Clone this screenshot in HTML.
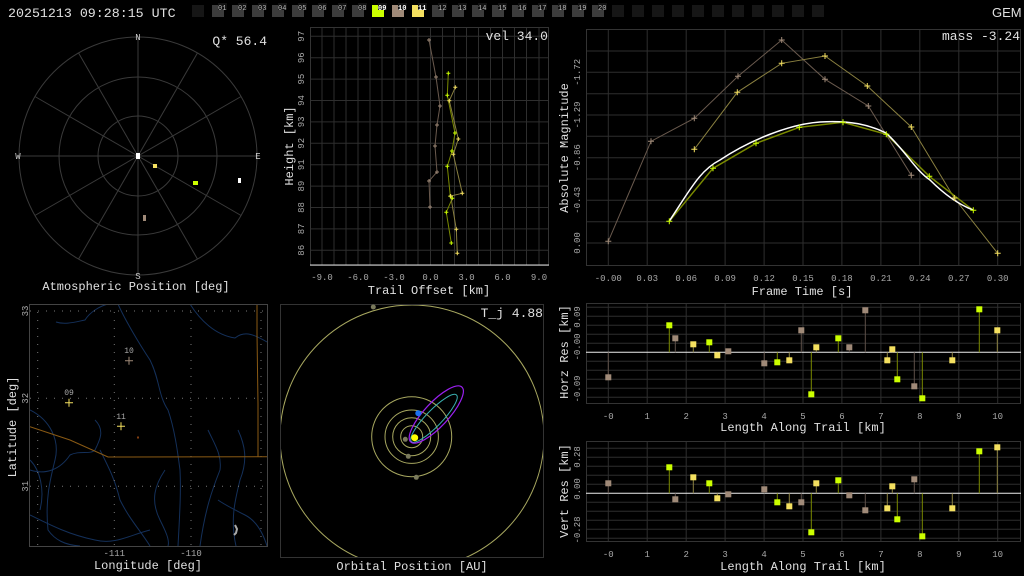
<!DOCTYPE html>
<html><head><meta charset="utf-8"><style>
html,body{margin:0;padding:0;background:#000;width:1024px;height:576px;overflow:hidden}
svg{display:block}
text{font-family:"Liberation Mono",monospace}
.t{fill:#e0e0e0;font-size:12px}
.k{fill:#a8a8a8;font-size:9px}
.g{stroke:#2e2e2e;stroke-width:1;fill:none}
</style></head><body>
<svg width="1024" height="576" viewBox="0 0 1024 576" xmlns="http://www.w3.org/2000/svg">
<rect width="1024" height="576" fill="#000"/>
<!-- header -->
<text x="8" y="17" fill="#e0e0e0" style="font-size:13.3px">20251213 09:28:15 UTC</text>
<text x="992" y="17" fill="#e0e0e0" style="font-family:'Liberation Sans',sans-serif;font-size:13px">GEM</text>
<g>
<rect x="192" y="5" width="12" height="12" fill="#161616"/>
<rect x="212" y="5" width="12" height="12" fill="#3c3c3c"/><rect x="218" y="3" width="9" height="7" fill="#111"/><text x="218" y="10" fill="#bbb" style="font-size:7px">01</text>
<rect x="232" y="5" width="12" height="12" fill="#3c3c3c"/><rect x="238" y="3" width="9" height="7" fill="#111"/><text x="238" y="10" fill="#bbb" style="font-size:7px">02</text>
<rect x="252" y="5" width="12" height="12" fill="#3c3c3c"/><rect x="258" y="3" width="9" height="7" fill="#111"/><text x="258" y="10" fill="#bbb" style="font-size:7px">03</text>
<rect x="272" y="5" width="12" height="12" fill="#3c3c3c"/><rect x="278" y="3" width="9" height="7" fill="#111"/><text x="278" y="10" fill="#bbb" style="font-size:7px">04</text>
<rect x="292" y="5" width="12" height="12" fill="#3c3c3c"/><rect x="298" y="3" width="9" height="7" fill="#111"/><text x="298" y="10" fill="#bbb" style="font-size:7px">05</text>
<rect x="312" y="5" width="12" height="12" fill="#3c3c3c"/><rect x="318" y="3" width="9" height="7" fill="#111"/><text x="318" y="10" fill="#bbb" style="font-size:7px">06</text>
<rect x="332" y="5" width="12" height="12" fill="#3c3c3c"/><rect x="338" y="3" width="9" height="7" fill="#111"/><text x="338" y="10" fill="#bbb" style="font-size:7px">07</text>
<rect x="352" y="5" width="12" height="12" fill="#3c3c3c"/><rect x="358" y="3" width="9" height="7" fill="#111"/><text x="358" y="10" fill="#bbb" style="font-size:7px">08</text>
<rect x="372" y="5" width="12" height="12" fill="#ccff00"/><rect x="378" y="3" width="9" height="7" fill="#111"/><text x="378" y="10" fill="#fff" style="font-size:7px;font-weight:bold">09</text>
<rect x="392" y="5" width="12" height="12" fill="#a08a78"/><rect x="398" y="3" width="9" height="7" fill="#111"/><text x="398" y="10" fill="#fff" style="font-size:7px;font-weight:bold">10</text>
<rect x="412" y="5" width="12" height="12" fill="#f4e060"/><rect x="418" y="3" width="9" height="7" fill="#111"/><text x="418" y="10" fill="#fff" style="font-size:7px;font-weight:bold">11</text>
<rect x="432" y="5" width="12" height="12" fill="#3c3c3c"/><rect x="438" y="3" width="9" height="7" fill="#111"/><text x="438" y="10" fill="#bbb" style="font-size:7px">12</text>
<rect x="452" y="5" width="12" height="12" fill="#3c3c3c"/><rect x="458" y="3" width="9" height="7" fill="#111"/><text x="458" y="10" fill="#bbb" style="font-size:7px">13</text>
<rect x="472" y="5" width="12" height="12" fill="#3c3c3c"/><rect x="478" y="3" width="9" height="7" fill="#111"/><text x="478" y="10" fill="#bbb" style="font-size:7px">14</text>
<rect x="492" y="5" width="12" height="12" fill="#3c3c3c"/><rect x="498" y="3" width="9" height="7" fill="#111"/><text x="498" y="10" fill="#bbb" style="font-size:7px">15</text>
<rect x="512" y="5" width="12" height="12" fill="#3c3c3c"/><rect x="518" y="3" width="9" height="7" fill="#111"/><text x="518" y="10" fill="#bbb" style="font-size:7px">16</text>
<rect x="532" y="5" width="12" height="12" fill="#3c3c3c"/><rect x="538" y="3" width="9" height="7" fill="#111"/><text x="538" y="10" fill="#bbb" style="font-size:7px">17</text>
<rect x="552" y="5" width="12" height="12" fill="#3c3c3c"/><rect x="558" y="3" width="9" height="7" fill="#111"/><text x="558" y="10" fill="#bbb" style="font-size:7px">18</text>
<rect x="572" y="5" width="12" height="12" fill="#3c3c3c"/><rect x="578" y="3" width="9" height="7" fill="#111"/><text x="578" y="10" fill="#bbb" style="font-size:7px">19</text>
<rect x="592" y="5" width="12" height="12" fill="#3c3c3c"/><rect x="598" y="3" width="9" height="7" fill="#111"/><text x="598" y="10" fill="#bbb" style="font-size:7px">20</text>
<g fill="#161616"><rect x="612" y="5" width="12" height="12"/><rect x="632" y="5" width="12" height="12"/><rect x="652" y="5" width="12" height="12"/><rect x="672" y="5" width="12" height="12"/><rect x="692" y="5" width="12" height="12"/><rect x="712" y="5" width="12" height="12"/><rect x="732" y="5" width="12" height="12"/><rect x="752" y="5" width="12" height="12"/><rect x="772" y="5" width="12" height="12"/><rect x="792" y="5" width="12" height="12"/><rect x="812" y="5" width="12" height="12"/></g>
</g>

<!-- polar panel -->
<g stroke="#3a3a3a" fill="none" stroke-width="1">
<circle cx="138" cy="156" r="40"/><circle cx="138" cy="156" r="79"/><circle cx="138" cy="156" r="119"/>
<line x1="138" y1="37" x2="138" y2="275"/><line x1="19" y1="156" x2="257" y2="156"/>
<line x1="78.5" y1="52.9" x2="197.5" y2="259.1"/><line x1="197.5" y1="52.9" x2="78.5" y2="259.1"/>
<line x1="34.9" y1="96.5" x2="241.1" y2="215.5"/><line x1="241.1" y1="96.5" x2="34.9" y2="215.5"/>
</g>
<g fill="#ccc" style="font-size:9px" text-anchor="middle"><text x="138" y="40">N</text><text x="138" y="279">S</text><text x="18" y="159">W</text><text x="258" y="159">E</text></g>
<text x="267" y="45" class="t" text-anchor="end" style="font-size:13px">Q* 56.4</text>
<rect x="136" y="153" width="4" height="6" fill="#fff"/>
<rect x="153" y="164" width="4" height="4" fill="#f4e060"/>
<rect x="193" y="181" width="5" height="4" fill="#ccff00"/>
<rect x="143" y="215" width="3" height="6" fill="#a08a78"/>
<rect x="238" y="178" width="3" height="5" fill="#fff"/>
<text x="136" y="290" class="t" text-anchor="middle">Atmospheric Position [deg]</text>

<!-- trail panel -->
<g class="g">
<line x1="322" y1="27" x2="322" y2="265"/><line x1="334" y1="27" x2="334" y2="265"/><line x1="346" y1="27" x2="346" y2="265"/><line x1="358" y1="27" x2="358" y2="265"/><line x1="370" y1="27" x2="370" y2="265"/><line x1="382" y1="27" x2="382" y2="265"/><line x1="394" y1="27" x2="394" y2="265"/><line x1="406" y1="27" x2="406" y2="265"/><line x1="418" y1="27" x2="418" y2="265"/><line x1="430.5" y1="27" x2="430.5" y2="265"/><line x1="442.5" y1="27" x2="442.5" y2="265"/><line x1="454.5" y1="27" x2="454.5" y2="265"/><line x1="466.5" y1="27" x2="466.5" y2="265"/><line x1="478.5" y1="27" x2="478.5" y2="265"/><line x1="490.5" y1="27" x2="490.5" y2="265"/><line x1="502.5" y1="27" x2="502.5" y2="265"/><line x1="514.5" y1="27" x2="514.5" y2="265"/><line x1="526.5" y1="27" x2="526.5" y2="265"/><line x1="539" y1="27" x2="539" y2="265"/>
<line x1="310" y1="36.3" x2="548" y2="36.3"/><line x1="310" y1="57.7" x2="548" y2="57.7"/><line x1="310" y1="79.1" x2="548" y2="79.1"/><line x1="310" y1="100.5" x2="548" y2="100.5"/><line x1="310" y1="121.9" x2="548" y2="121.9"/><line x1="310" y1="143.3" x2="548" y2="143.3"/><line x1="310" y1="164.7" x2="548" y2="164.7"/><line x1="310" y1="186.1" x2="548" y2="186.1"/><line x1="310" y1="207.5" x2="548" y2="207.5"/><line x1="310" y1="228.9" x2="548" y2="228.9"/><line x1="310" y1="250.3" x2="548" y2="250.3"/>
<rect x="310.5" y="27.5" width="238" height="238" stroke="#333"/>
</g>
<line x1="310" y1="265" x2="549" y2="265" stroke="#ddd"/>
<g class="k" text-anchor="middle"><text x="322" y="280">-9.0</text><text x="358" y="280">-6.0</text><text x="394" y="280">-3.0</text><text x="430.5" y="280">0.0</text><text x="466.5" y="280">3.0</text><text x="502.5" y="280">6.0</text><text x="539" y="280">9.0</text></g>
<g class="k" text-anchor="middle">
<text transform="translate(304,36.3) rotate(-90)">97</text><text transform="translate(304,57.7) rotate(-90)">96</text><text transform="translate(304,79.1) rotate(-90)">95</text><text transform="translate(304,100.5) rotate(-90)">94</text><text transform="translate(304,121.9) rotate(-90)">93</text><text transform="translate(304,143.3) rotate(-90)">92</text><text transform="translate(304,164.7) rotate(-90)">91</text><text transform="translate(304,186.1) rotate(-90)">89</text><text transform="translate(304,207.5) rotate(-90)">88</text><text transform="translate(304,228.9) rotate(-90)">87</text><text transform="translate(304,250.3) rotate(-90)">86</text></g>
<text class="t" text-anchor="middle" transform="translate(293,146) rotate(-90)">Height [km]</text>
<text x="429" y="294" class="t" text-anchor="middle">Trail Offset [km]</text>
<text x="548" y="40" class="t" text-anchor="end" style="font-size:13px">vel 34.0</text>
<polyline fill="none" stroke="#6a5a4e" points="429,40 436,77 440,106 437,125 435,146 437,172 429,181 430,207"/>
<polyline fill="none" stroke="#7a8a00" points="448.3,73.3 447.3,95.3 455,133 452,151 447.3,166.3 450.3,196.3 452.3,198.3 446.3,212.3 451.3,243"/>
<polyline fill="none" stroke="#8a8040" points="455.3,87.3 449.3,100.7 458.3,139 453.3,154.3 462.3,193.3 450.7,196 456.3,229.3 457.3,253.3"/>
<g stroke-width="1" fill="none">
<path stroke="#a08a78" d="M427,40h4M429,38v4M434,77h4M436,75v4M438,106h4M440,104v4M435,125h4M437,123v4M433,146h4M435,144v4M435,172h4M437,170v4M427,181h4M429,179v4M428,207h4M430,205v4"/>
<path stroke="#ccff00" d="M446.3,73.3h4M448.3,71.3v4M445.3,95.3h4M447.3,93.3v4M453,133h4M455,131v4M450,151h4M452,149v4M445.3,166.3h4M447.3,164.3v4M448.3,196.3h4M450.3,194.3v4M450.3,198.3h4M452.3,196.3v4M444.3,212.3h4M446.3,210.3v4M449.3,243h4M451.3,241v4"/>
<path stroke="#f4e060" d="M453.3,87.3h4M455.3,85.3v4M447.3,100.7h4M449.3,98.7v4M456.3,139h4M458.3,137v4M451.3,154.3h4M453.3,152.3v4M460.3,193.3h4M462.3,191.3v4M448.7,196h4M450.7,194v4M454.3,229.3h4M456.3,227.3v4M455.3,253.3h4M457.3,251.3v4"/>
</g>

<!-- magnitude panel -->
<g class="g">
<line x1="608.3" y1="29" x2="608.3" y2="266"/><line x1="647.2" y1="29" x2="647.2" y2="266"/><line x1="686.2" y1="29" x2="686.2" y2="266"/><line x1="725.1" y1="29" x2="725.1" y2="266"/><line x1="764.1" y1="29" x2="764.1" y2="266"/><line x1="803" y1="29" x2="803" y2="266"/><line x1="841.9" y1="29" x2="841.9" y2="266"/><line x1="880.9" y1="29" x2="880.9" y2="266"/><line x1="919.8" y1="29" x2="919.8" y2="266"/><line x1="958.8" y1="29" x2="958.8" y2="266"/><line x1="997.7" y1="29" x2="997.7" y2="266"/>
<line x1="586" y1="243" x2="1021" y2="243"/><line x1="586" y1="221.7" x2="1021" y2="221.7"/><line x1="586" y1="200.3" x2="1021" y2="200.3"/><line x1="586" y1="179" x2="1021" y2="179"/><line x1="586" y1="157.7" x2="1021" y2="157.7"/><line x1="586" y1="136.3" x2="1021" y2="136.3"/><line x1="586" y1="115" x2="1021" y2="115"/><line x1="586" y1="93.7" x2="1021" y2="93.7"/><line x1="586" y1="72.3" x2="1021" y2="72.3"/><line x1="586" y1="51" x2="1021" y2="51"/>
<rect x="586.5" y="29.5" width="434" height="236" stroke="#333"/>
</g>
<g class="k" text-anchor="middle"><text x="608.3" y="281">-0.00</text><text x="647.2" y="281">0.03</text><text x="686.2" y="281">0.06</text><text x="725.1" y="281">0.09</text><text x="764.1" y="281">0.12</text><text x="803" y="281">0.15</text><text x="841.9" y="281">0.18</text><text x="880.9" y="281">0.21</text><text x="919.8" y="281">0.24</text><text x="958.8" y="281">0.27</text><text x="997.7" y="281">0.30</text></g>
<g class="k" text-anchor="middle"><text transform="translate(580,243) rotate(-90)">0.00</text><text transform="translate(580,200.3) rotate(-90)">-0.43</text><text transform="translate(580,157.7) rotate(-90)">-0.86</text><text transform="translate(580,115) rotate(-90)">-1.29</text><text transform="translate(580,72.3) rotate(-90)">-1.72</text></g>
<text class="t" text-anchor="middle" transform="translate(568,148) rotate(-90)">Absolute Magnitude</text>
<text x="802" y="295" class="t" text-anchor="middle">Frame Time [s]</text>
<text x="1020" y="40" class="t" text-anchor="end" style="font-size:13px">mass -3.24</text>
<polyline fill="none" stroke="#6a5a4e" points="608.3,241.3 651,141.3 694.3,118.3 738,76.3 781.7,40 825,79.3 868.3,106 911.3,175.3"/>
<polyline fill="none" stroke="#8a8040" points="694.3,149.3 737.3,92.3 781.7,63.3 825,56 867.3,86 911.3,127 954.3,198 997.7,253.3"/>
<polyline fill="none" stroke="#7a8a00" stroke-width="1.5" points="669.3,221.3 713,168.3 756,143.3 799.3,127.3 843,122.3 886.3,134.3 929.3,176.3 973.3,210.3"/>
<path fill="none" stroke="#fff" stroke-width="1.5" d="M669.3,221 C690,190 700,170 720,160 C750,140 790,124 820,122 C850,120 870,125 886,133 C905,150 915,170 930,180 C945,195 960,205 973,210"/>
<g fill="none">
<path stroke="#a08a78" d="M605.3,241.3h6M608.3,238.3v6M648,141.3h6M651,138.3v6M691.3,118.3h6M694.3,115.3v6M735,76.3h6M738,73.3v6M778.7,40h6M781.7,37v6M822,79.3h6M825,76.3v6M865.3,106h6M868.3,103v6M908.3,175.3h6M911.3,172.3v6"/>
<path stroke="#f4e060" d="M691.3,149.3h6M694.3,146.3v6M734.3,92.3h6M737.3,89.3v6M778.7,63.3h6M781.7,60.3v6M822,56h6M825,53v6M864.3,86h6M867.3,83v6M908.3,127h6M911.3,124v6M951.3,198h6M954.3,195v6M994.7,253.3h6M997.7,250.3v6"/>
<path stroke="#ccff00" d="M666.3,221.3h6M669.3,218.3v6M710,168.3h6M713,165.3v6M753,143.3h6M756,140.3v6M796.3,127.3h6M799.3,124.3v6M840,122.3h6M843,119.3v6M883.3,134.3h6M886.3,131.3v6M926.3,176.3h6M929.3,173.3v6M970.3,210.3h6M973.3,207.3v6"/>
</g>

<!-- horz residual -->
<g class="g">
<line x1="608.3" y1="303" x2="608.3" y2="403"/><line x1="647.2" y1="303" x2="647.2" y2="403"/><line x1="686.2" y1="303" x2="686.2" y2="403"/><line x1="725.1" y1="303" x2="725.1" y2="403"/><line x1="764.1" y1="303" x2="764.1" y2="403"/><line x1="803" y1="303" x2="803" y2="403"/><line x1="841.9" y1="303" x2="841.9" y2="403"/><line x1="880.9" y1="303" x2="880.9" y2="403"/><line x1="919.8" y1="303" x2="919.8" y2="403"/><line x1="958.8" y1="303" x2="958.8" y2="403"/><line x1="997.7" y1="303" x2="997.7" y2="403"/>
<line x1="586" y1="307.3" x2="1021" y2="307.3"/><line x1="586" y1="316.3" x2="1021" y2="316.3"/><line x1="586" y1="325.3" x2="1021" y2="325.3"/><line x1="586" y1="334.3" x2="1021" y2="334.3"/><line x1="586" y1="343.3" x2="1021" y2="343.3"/><line x1="586" y1="361.3" x2="1021" y2="361.3"/><line x1="586" y1="370.3" x2="1021" y2="370.3"/><line x1="586" y1="379.3" x2="1021" y2="379.3"/><line x1="586" y1="388.3" x2="1021" y2="388.3"/><line x1="586" y1="397.3" x2="1021" y2="397.3"/>
<rect x="586.5" y="303.5" width="434" height="100" stroke="#333"/>
</g>
<line x1="586" y1="352.3" x2="1021" y2="352.3" stroke="#eee"/>
<g class="k" text-anchor="middle"><text x="608.3" y="419">-0</text><text x="647.2" y="419">1</text><text x="686.2" y="419">2</text><text x="725.1" y="419">3</text><text x="764.1" y="419">4</text><text x="803" y="419">5</text><text x="841.9" y="419">6</text><text x="880.9" y="419">7</text><text x="919.8" y="419">8</text><text x="958.8" y="419">9</text><text x="997.7" y="419">10</text></g>
<g class="k" text-anchor="middle"><text transform="translate(580,317) rotate(-90)">0.09</text><text transform="translate(580,347) rotate(-90)">-0.00</text><text transform="translate(580,389) rotate(-90)">-0.09</text></g>
<text class="t" text-anchor="middle" transform="translate(568,352) rotate(-90)">Horz Res [km]</text>
<text x="803" y="431" class="t" text-anchor="middle">Length Along Trail [km]</text>

<!-- vert residual -->
<g class="g">
<line x1="608.3" y1="441" x2="608.3" y2="541"/><line x1="647.2" y1="441" x2="647.2" y2="541"/><line x1="686.2" y1="441" x2="686.2" y2="541"/><line x1="725.1" y1="441" x2="725.1" y2="541"/><line x1="764.1" y1="441" x2="764.1" y2="541"/><line x1="803" y1="441" x2="803" y2="541"/><line x1="841.9" y1="441" x2="841.9" y2="541"/><line x1="880.9" y1="441" x2="880.9" y2="541"/><line x1="919.8" y1="441" x2="919.8" y2="541"/><line x1="958.8" y1="441" x2="958.8" y2="541"/><line x1="997.7" y1="441" x2="997.7" y2="541"/>
<line x1="586" y1="448.3" x2="1021" y2="448.3"/><line x1="586" y1="457.3" x2="1021" y2="457.3"/><line x1="586" y1="466.3" x2="1021" y2="466.3"/><line x1="586" y1="475.3" x2="1021" y2="475.3"/><line x1="586" y1="484.3" x2="1021" y2="484.3"/><line x1="586" y1="502.3" x2="1021" y2="502.3"/><line x1="586" y1="511.3" x2="1021" y2="511.3"/><line x1="586" y1="520.3" x2="1021" y2="520.3"/><line x1="586" y1="529.3" x2="1021" y2="529.3"/><line x1="586" y1="538.3" x2="1021" y2="538.3"/>
<rect x="586.5" y="441.5" width="434" height="100" stroke="#333"/>
</g>
<line x1="586" y1="493.3" x2="1021" y2="493.3" stroke="#eee"/>
<g class="k" text-anchor="middle"><text x="608.3" y="557">-0</text><text x="647.2" y="557">1</text><text x="686.2" y="557">2</text><text x="725.1" y="557">3</text><text x="764.1" y="557">4</text><text x="803" y="557">5</text><text x="841.9" y="557">6</text><text x="880.9" y="557">7</text><text x="919.8" y="557">8</text><text x="958.8" y="557">9</text><text x="997.7" y="557">10</text></g>
<g class="k" text-anchor="middle"><text transform="translate(580,457) rotate(-90)">0.28</text><text transform="translate(580,489) rotate(-90)">0.00</text><text transform="translate(580,530) rotate(-90)">-0.28</text></g>
<text class="t" text-anchor="middle" transform="translate(568,491) rotate(-90)">Vert Res [km]</text>
<text x="803" y="570" class="t" text-anchor="middle">Length Along Trail [km]</text>

<!-- residual stems & markers -->
<g stroke-width="1">
<!-- horz -->
<path stroke="#5e5048" d="M608.3,352.3V377.3M675.3,352.3V338.3M728.3,352.3V351.3M764.3,352.3V363.3M801.3,352.3V330.3M849.3,352.3V347.3M865.3,352.3V310.3M914.3,352.3V386.3"/>
<path stroke="#7a8a00" d="M669.3,352.3V325.3M709.3,352.3V342.3M777.3,352.3V362.3M811.3,352.3V394.3M838.3,352.3V338.3M897.3,352.3V379.3M922.3,352.3V398.3M979.3,352.3V309.3"/>
<path stroke="#8a8040" d="M693.3,352.3V344.3M717.3,352.3V355.3M789.3,352.3V360.3M816.3,352.3V347.3M887.3,352.3V360.3M892.3,352.3V349.3M952.3,352.3V360.3M997.3,352.3V330.3"/>
<!-- vert -->
<path stroke="#5e5048" d="M608.3,493.3V483.3M675.3,493.3V499.3M728.3,493.3V494.3M764.3,493.3V489.3M801.3,493.3V502.3M849.3,493.3V495.3M865.3,493.3V510.3M914.3,493.3V479.3"/>
<path stroke="#7a8a00" d="M669.3,493.3V467.3M709.3,493.3V483.3M777.3,493.3V502.3M811.3,493.3V532.3M838.3,493.3V480.3M897.3,493.3V519.3M922.3,493.3V536.3M979.3,493.3V451.3"/>
<path stroke="#8a8040" d="M693.3,493.3V477.3M717.3,493.3V498.3M789.3,493.3V506.3M816.3,493.3V483.3M887.3,493.3V508.3M892.3,493.3V486.3M952.3,493.3V508.3M997.3,493.3V447.3"/>
</g>
<g fill="#a08a78">
<rect x="605.3" y="374.3" width="6" height="6"/><rect x="672.3" y="335.3" width="6" height="6"/><rect x="725.3" y="348.3" width="6" height="6"/><rect x="761.3" y="360.3" width="6" height="6"/><rect x="798.3" y="327.3" width="6" height="6"/><rect x="846.3" y="344.3" width="6" height="6"/><rect x="862.3" y="307.3" width="6" height="6"/><rect x="911.3" y="383.3" width="6" height="6"/>
<rect x="605.3" y="480.3" width="6" height="6"/><rect x="672.3" y="496.3" width="6" height="6"/><rect x="725.3" y="491.3" width="6" height="6"/><rect x="761.3" y="486.3" width="6" height="6"/><rect x="798.3" y="499.3" width="6" height="6"/><rect x="846.3" y="492.3" width="6" height="6"/><rect x="862.3" y="507.3" width="6" height="6"/><rect x="911.3" y="476.3" width="6" height="6"/>
</g>
<g fill="#ccff00">
<rect x="666.3" y="322.3" width="6" height="6"/><rect x="706.3" y="339.3" width="6" height="6"/><rect x="774.3" y="359.3" width="6" height="6"/><rect x="808.3" y="391.3" width="6" height="6"/><rect x="835.3" y="335.3" width="6" height="6"/><rect x="894.3" y="376.3" width="6" height="6"/><rect x="919.3" y="395.3" width="6" height="6"/><rect x="976.3" y="306.3" width="6" height="6"/>
<rect x="666.3" y="464.3" width="6" height="6"/><rect x="706.3" y="480.3" width="6" height="6"/><rect x="774.3" y="499.3" width="6" height="6"/><rect x="808.3" y="529.3" width="6" height="6"/><rect x="835.3" y="477.3" width="6" height="6"/><rect x="894.3" y="516.3" width="6" height="6"/><rect x="919.3" y="533.3" width="6" height="6"/><rect x="976.3" y="448.3" width="6" height="6"/>
</g>
<g fill="#f4e060">
<rect x="690.3" y="341.3" width="6" height="6"/><rect x="714.3" y="352.3" width="6" height="6"/><rect x="786.3" y="357.3" width="6" height="6"/><rect x="813.3" y="344.3" width="6" height="6"/><rect x="884.3" y="357.3" width="6" height="6"/><rect x="889.3" y="346.3" width="6" height="6"/><rect x="949.3" y="357.3" width="6" height="6"/><rect x="994.3" y="327.3" width="6" height="6"/>
<rect x="690.3" y="474.3" width="6" height="6"/><rect x="714.3" y="495.3" width="6" height="6"/><rect x="786.3" y="503.3" width="6" height="6"/><rect x="813.3" y="480.3" width="6" height="6"/><rect x="884.3" y="505.3" width="6" height="6"/><rect x="889.3" y="483.3" width="6" height="6"/><rect x="949.3" y="505.3" width="6" height="6"/><rect x="994.3" y="444.3" width="6" height="6"/>
</g>

<!-- map panel -->
<svg x="30" y="304" width="238" height="242" viewBox="30 304 238 242" overflow="hidden">
<g stroke="#14305a" fill="none" stroke-width="1">
<path d="M118,304 C125,320 140,345 150,360 C160,380 158,395 168,410 C175,430 178,455 180,470 C181,490 180,510 178,546"/>
<path d="M56,322 C65,325 75,322 85,320 C90,312 100,306 108,304"/>
<path d="M190,304 C200,320 215,335 235,338 C245,330 255,335 267,342"/>
<path d="M30,410 C50,420 60,440 55,460 C50,480 45,500 48,530 C55,540 65,545 80,546"/>
<path d="M30,470 C45,475 60,470 70,455 C80,450 90,455 95,450 C100,440 105,430 95,420"/>
<path d="M100,450 C110,470 115,480 120,500 C130,520 140,530 150,546"/>
<path d="M165,470 C155,485 150,500 160,520 C165,530 170,540 168,546"/>
<path d="M238,430 C245,445 248,460 240,480 C235,500 230,520 236,546"/>
<path d="M208,430 C215,445 222,455 220,470 C212,490 205,510 200,546"/>
<path d="M30,515 C50,525 70,535 95,540 C115,545 130,535 150,530"/>
<path d="M218,500 C225,505 235,510 245,515 C255,520 262,530 267,546"/>
<path d="M30,460 C40,470 45,490 40,510"/>
</g>
<g stroke="#777" stroke-width="1" stroke-dasharray="1 7" fill="none">
<line x1="37.7" y1="304" x2="37.7" y2="546"/><line x1="114.3" y1="304" x2="114.3" y2="546"/><line x1="191" y1="304" x2="191" y2="546"/><line x1="261" y1="304" x2="261" y2="546"/>
<line x1="30" y1="311" x2="268" y2="311"/><line x1="30" y1="398.3" x2="268" y2="398.3"/><line x1="30" y1="486.3" x2="268" y2="486.3"/>
</g>
<polyline fill="none" stroke="#8a5a14" stroke-width="1" points="30,426.7 70,440 108,457 267,456.7"/>
<polyline fill="none" stroke="#8a5a14" stroke-width="1" points="257,304 257,334 258,404 258,456.7"/>
<path d="M235,525 l2,4 l-1,4 l-2,2" stroke="#aaa" stroke-width="2" fill="none"/>
</svg>
<rect x="29.5" y="304.5" width="238" height="242" fill="none" stroke="#444"/>
<path d="M125,360.7h8M129,356.7v8" stroke="#a08a78"/>
<path d="M65,402.7h8M69,398.7v8" stroke="#f4e060"/>
<path d="M117,426.3h8M121,422.3v8" stroke="#f4e060"/>
<rect x="137.5" y="436.5" width="1" height="2" fill="#ff7a20"/>
<g fill="#aaa" style="font-size:8px" text-anchor="middle"><text x="129" y="353">10</text><text x="69" y="395">09</text><text x="121" y="419">11</text></g>
<g class="k" text-anchor="middle"><text transform="translate(28,311) rotate(-90)">33</text><text transform="translate(28,398.3) rotate(-90)">32</text><text transform="translate(28,486.3) rotate(-90)">31</text><text x="114.3" y="556">-111</text><text x="191" y="556">-110</text></g>
<text class="t" text-anchor="middle" transform="translate(16,427) rotate(-90)">Latitude [deg]</text>
<text x="148" y="569" class="t" text-anchor="middle">Longitude [deg]</text>

<!-- orbital panel -->
<svg x="281" y="304" width="263" height="254" viewBox="281 304 263 254" overflow="hidden">
<g fill="none" stroke="#a8a860" stroke-width="1">
<circle cx="412" cy="437" r="132"/>
<circle cx="411.7" cy="436.7" r="40"/>
<circle cx="411.7" cy="436.7" r="26.7"/>
<circle cx="411.7" cy="436.7" r="19"/>
<circle cx="411.7" cy="436.7" r="11"/>
</g>
</svg>
<rect x="280.5" y="304.5" width="263" height="253" fill="none" stroke="#333"/>
<g fill="#7a7a5c"><circle cx="373.3" cy="307" r="2.5"/><circle cx="416.3" cy="477.3" r="2.5"/><circle cx="408.3" cy="456.3" r="2.5"/><circle cx="405.3" cy="439.3" r="2.5"/></g>
<ellipse cx="434" cy="418.3" rx="32.4" ry="8" transform="rotate(-46 434 418.3)" fill="none" stroke="#3ab0b0"/>
<ellipse cx="436.3" cy="414.5" rx="37.5" ry="12" transform="rotate(-47 436.3 414.5)" fill="none" stroke="#9a20f0" stroke-width="1.2"/>
<circle cx="418.3" cy="413.3" r="3" fill="#1a70f0"/>
<circle cx="414.7" cy="437.7" r="3.5" fill="#ffff00"/>
<text x="543" y="317" class="t" text-anchor="end" style="font-size:13px">T_j 4.88</text>
<text x="412" y="570" class="t" text-anchor="middle">Orbital Position [AU]</text>
</svg>
</body></html>
